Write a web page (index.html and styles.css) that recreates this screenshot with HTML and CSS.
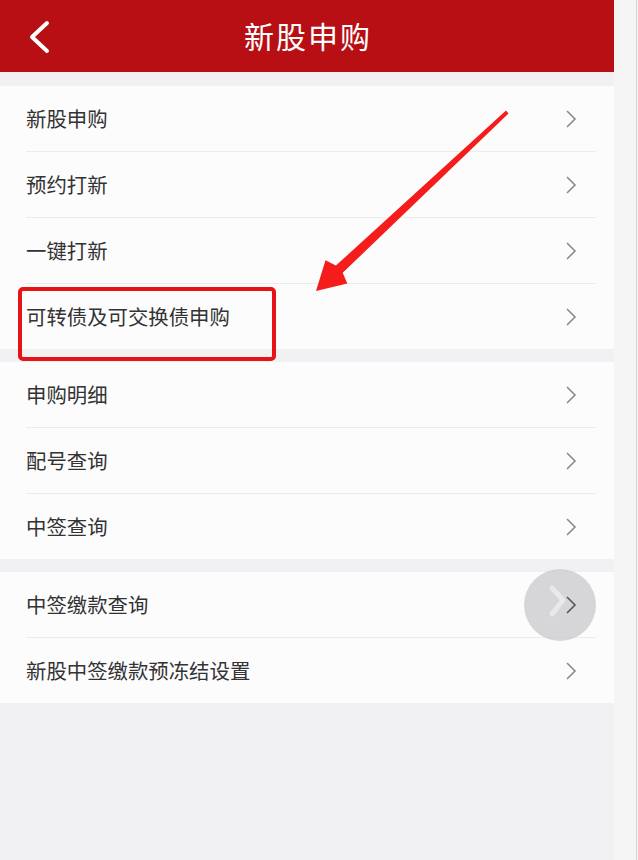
FILE: index.html
```html
<!DOCTYPE html>
<html lang="zh-CN">
<head>
<meta charset="utf-8">
<title>新股申购</title>
<link rel="stylesheet" href="styles.css">
</head>
<body>
<div class="frame">
  <div class="screen">
    <header class="topbar">
      <svg class="back" width="24" height="34" viewBox="0 0 24 34"><polyline points="19,3 4,17 19,31" fill="none" stroke="#fff" stroke-width="4" stroke-linecap="round" stroke-linejoin="round"/></svg>
      <h1 class="title">新股申购</h1>
    </header>

    <section class="group first">
      <div class="row"><span class="label">新股申购</span><svg class="chev" width="14" height="20" viewBox="0 0 14 20"><polyline points="3,2 11,10 3,18" fill="none" stroke="#8a8a8a" stroke-width="1.6"/></svg></div>
      <div class="row"><span class="label">预约打新</span><svg class="chev" width="14" height="20" viewBox="0 0 14 20"><polyline points="3,2 11,10 3,18" fill="none" stroke="#8a8a8a" stroke-width="1.6"/></svg></div>
      <div class="row"><span class="label">一键打新</span><svg class="chev" width="14" height="20" viewBox="0 0 14 20"><polyline points="3,2 11,10 3,18" fill="none" stroke="#8a8a8a" stroke-width="1.6"/></svg></div>
      <div class="row"><span class="label">可转债及可交换债申购</span><svg class="chev" width="14" height="20" viewBox="0 0 14 20"><polyline points="3,2 11,10 3,18" fill="none" stroke="#8a8a8a" stroke-width="1.6"/></svg></div>
    </section>

    <section class="group">
      <div class="row"><span class="label">申购明细</span><svg class="chev" width="14" height="20" viewBox="0 0 14 20"><polyline points="3,2 11,10 3,18" fill="none" stroke="#8a8a8a" stroke-width="1.6"/></svg></div>
      <div class="row"><span class="label">配号查询</span><svg class="chev" width="14" height="20" viewBox="0 0 14 20"><polyline points="3,2 11,10 3,18" fill="none" stroke="#8a8a8a" stroke-width="1.6"/></svg></div>
      <div class="row"><span class="label">中签查询</span><svg class="chev" width="14" height="20" viewBox="0 0 14 20"><polyline points="3,2 11,10 3,18" fill="none" stroke="#8a8a8a" stroke-width="1.6"/></svg></div>
    </section>

    <section class="group">
      <div class="row"><span class="label">中签缴款查询</span><svg class="chev top" width="14" height="20" viewBox="0 0 14 20"><polyline points="3,2 11,10 3,18" fill="none" stroke="#555" stroke-width="1.6"/></svg></div>
      <div class="row"><span class="label">新股中签缴款预冻结设置</span><svg class="chev" width="14" height="20" viewBox="0 0 14 20"><polyline points="3,2 11,10 3,18" fill="none" stroke="#8a8a8a" stroke-width="1.6"/></svg></div>
    </section>

    <div class="highlight"></div>
    <svg class="arrow" width="614" height="860" viewBox="0 0 614 860"><polygon points="316,291 347.3,283.6 342.7,272.8 508.5,113.5 506,110.5 335.9,265.6 325.5,260.2" fill="#f51c1c"/></svg>
    <div class="assist"><svg width="72" height="72" viewBox="0 0 72 72"><polyline points="28,19 39,31 28,45" fill="none" stroke="#ececec" stroke-width="5" stroke-linecap="round" stroke-linejoin="round" opacity="0.85"/></svg></div>
  </div>
</div>
</body>
</html>
```

FILE: styles.css
```css
* { box-sizing: border-box; }
html, body { margin: 0; padding: 0; }
body {
  background: #f4f4f4;
  font-family: "Noto Sans CJK SC", "Noto Sans", sans-serif;
}
.frame {
  width: 637px;
  height: 860px;
  border-right: 1px solid #d6d6d6;
  background: #f5f5f5;
}
.screen {
  position: relative;
  width: 614px;
  height: 860px;
  background: #f1f0f2;
  overflow: hidden;
}
.topbar {
  height: 72px;
  background: #b70f14;
  display: flex;
  align-items: center;
  justify-content: center;
  position: relative;
}
.back {
  position: absolute;
  left: 28px;
  top: 20px;
}
.title {
  margin: 0 0 2px;
  color: #fff;
  font-size: 30px;
  font-weight: 400;
  letter-spacing: 2px;
  padding-left: 2px;
  line-height: 1;
}
.group {
  background: #fdfcfd;
  margin-top: 13px;
  padding-left: 26px;
}
.group.first { margin-top: 14px; }
.row {
  height: 66px;
  display: flex;
  align-items: center;
  justify-content: space-between;
  border-bottom: 1px solid #ececed;
  margin-right: 18px;
  padding-right: 18px;
}
.row:last-child {
  border-bottom: none;
  height: 65px;
}
.label {
  font-size: 20.4px;
  color: #333;
  line-height: 1;
}
.chev { display: block; }
.chev.top { position: relative; z-index: 3; }
.highlight {
  position: absolute;
  left: 18px;
  top: 287px;
  width: 258px;
  height: 74px;
  border: 4px solid #e61417;
  border-radius: 5px;
  z-index: 2;
}
.arrow {
  position: absolute;
  left: 0;
  top: 0;
  z-index: 2;
}
.assist {
  position: absolute;
  left: 524px;
  top: 569px;
  width: 72px;
  height: 72px;
  border-radius: 50%;
  background: rgba(205, 205, 207, 0.82);
  z-index: 2;
}
.assist svg { display: block; }
```
